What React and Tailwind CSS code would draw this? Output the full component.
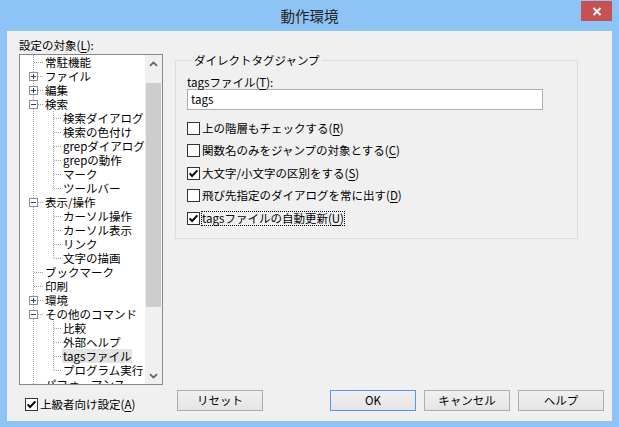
import React from "react";

const rows = [
  [0, null, "常駐機能"],
  [0, "+", "ファイル"],
  [0, "+", "編集"],
  [0, "-", "検索"],
  [1, null, "検索ダイアログ"],
  [1, null, "検索の色付け"],
  [1, null, "grepダイアログ"],
  [1, null, "grepの動作"],
  [1, null, "マーク"],
  [1, null, "ツールバー", true],
  [0, "-", "表示/操作"],
  [1, null, "カーソル操作"],
  [1, null, "カーソル表示"],
  [1, null, "リンク"],
  [1, null, "文字の描画", true],
  [0, null, "ブックマーク"],
  [0, null, "印刷"],
  [0, "+", "環境"],
  [0, "-", "その他のコマンド"],
  [1, null, "比較"],
  [1, null, "外部ヘルプ"],
  [1, null, "tagsファイル", false, true],
  [1, null, "プログラム実行", true],
  [0, null, "パフォーマンス"],
];

const DOT = "#a0a0a0";

function RowLines({ level, exp, last }) {
  const w = level === 0 ? 25 : 43;
  return (
    <svg width={w} height="14" viewBox={`0 0 ${w} 14`} shapeRendering="crispEdges" className="shrink-0">
      <line x1="13.5" y1="0" x2="13.5" y2="14" stroke={DOT} strokeDasharray="1 1" />
      {level === 0 && (
        <line x1="14" y1="7.5" x2="24" y2="7.5" stroke={DOT} strokeDasharray="1 1" />
      )}
      {level === 1 && (
        <>
          <line x1="33.5" y1="0" x2="33.5" y2={last ? 8 : 14} stroke={DOT} strokeDasharray="1 1" />
          <line x1="34" y1="7.5" x2="42" y2="7.5" stroke={DOT} strokeDasharray="1 1" />
        </>
      )}
      {exp && (
        <>
          <rect x="9.5" y="3.5" width="8" height="8" fill="#fff" stroke="#919191" />
          <line x1="11" y1="7.5" x2="16" y2="7.5" stroke="#2b3f73" />
          {exp === "+" && <line x1="13.5" y1="5" x2="13.5" y2="10" stroke="#2b3f73" />}
        </>
      )}
    </svg>
  );
}

function M({ c }) {
  return <span className="underline underline-offset-[2px] decoration-[1px]">{c}</span>;
}

function Check({ checked }) {
  return (
    <span className="w-[13px] h-[13px] border border-[#333333] bg-white flex items-center justify-center shrink-0">
      {checked && (
        <svg width="11" height="11" viewBox="0 0 11 11">
          <path d="M1.6 5.4 L4.1 8 L9.4 2.4" stroke="#000" strokeWidth="1.9" fill="none" />
        </svg>
      )}
    </span>
  );
}

function Chevron({ down }) {
  return (
    <svg width="9" height="6" viewBox="0 0 9 6">
      <path
        d={down ? "M1 1.2 L4.5 4.6 L8 1.2" : "M1 4.8 L4.5 1.4 L8 4.8"}
        stroke="#606060"
        strokeWidth="1.8"
        fill="none"
      />
    </svg>
  );
}

function Btn({ children, def }) {
  return (
    <div
      className={`w-[86px] h-[21px] flex items-center justify-center border bg-linear-to-b from-[#f0f0f0] to-[#e5e5e5] ${
        def ? "border-[#4f9be8]" : "border-[#adadad]"
      }`}
    >
      {children}
    </div>
  );
}

function CheckRow({ checked, children, focus, className = "" }) {
  return (
    <div className={`h-[14px] flex items-center ${className}`}>
      <Check checked={checked} />
      <span
        className={`ml-[2px] leading-[13px] whitespace-nowrap ${
          focus ? "outline outline-1 outline-dotted outline-black" : ""
        }`}
      >
        {children}
      </span>
    </div>
  );
}

export default function App() {
  return (
    <div className="w-[619px] h-[427px] bg-[#8ec4f5] flex flex-col font-['Noto_Sans_CJK_JP','Noto_Sans',sans-serif] text-[11.5px] text-black">
      <div className="h-[31px] relative flex items-center justify-center shrink-0">
        <span className="text-[14.5px] text-[#222222] mt-[1px]">動作環境</span>
        <div className="absolute right-[7px] top-[1px] w-[31px] h-[20px] bg-[#c75050] flex items-center justify-center">
          <svg width="10" height="9" viewBox="0 0 10 9">
            <path d="M1.5 1 L8.5 8 M8.5 1 L1.5 8" stroke="#fff" strokeWidth="2" fill="none" />
          </svg>
        </div>
      </div>
      <div className="mx-[7px] h-[390px] bg-[#f0f0f0] flex">
        {/* left column */}
        <div className="w-[156px] pl-[12px] pt-[7px] flex flex-col shrink-0">
          <div className="h-[14px] leading-[14px] mb-[2px] whitespace-nowrap">
            設定の対象(<M c="L" />):
          </div>
          <div className="w-[144px] h-[331px] border border-[#828790] bg-white flex">
            <div className="flex-1 overflow-hidden">
              {rows.map(([level, exp, text, last, sel], i) => (
                <div key={i} className="h-[14px] flex items-center">
                  <RowLines level={level} exp={exp} last={last} />
                  <span
                    className={`leading-[14px] h-[14px] px-[1px] -ml-[1px] whitespace-nowrap ${
                      sel ? "bg-[#e3e3e3]" : ""
                    }`}
                  >
                    {text}
                  </span>
                </div>
              ))}
            </div>
            <div className="w-[17px] bg-[#f0f0f0] flex flex-col shrink-0">
              <div className="h-[17px] flex items-center justify-center">
                <Chevron />
              </div>
              <div className="mt-[11px] h-[224px] bg-[#cdcdcd] mx-[1px]" />
              <div className="flex-1" />
              <div className="h-[17px] flex items-center justify-center">
                <Chevron down />
              </div>
            </div>
          </div>
          <div className="mt-[12px] ml-[6px]">
            <CheckRow checked>
              上級者向け設定(<M c="A" />)
            </CheckRow>
          </div>
        </div>
        {/* right column */}
        <div className="ml-[12px] flex-1 flex flex-col justify-between pt-[22px] pr-[8px] pb-[10px]">
          <fieldset className="w-[403px] border border-[#dcdcdc] pl-[11px] pb-[13px]">
            <legend className="ml-[5px] px-[2px] leading-[14px]">ダイレクトタグジャンプ</legend>
            <div className="mt-[8px] h-[14px] leading-[14px]">
              tagsファイル(<M c="T" />):
            </div>
            <div className="w-[356px] h-[21px] border border-[#adadad] bg-white pl-[3px] flex items-center">
              tags
            </div>
            <CheckRow className="mt-[11px]">
              上の階層もチェックする(<M c="R" />)
            </CheckRow>
            <CheckRow className="mt-[8px]">
              関数名のみをジャンプの対象とする(<M c="C" />)
            </CheckRow>
            <CheckRow checked className="mt-[9px]">
              大文字/小文字の区別をする(<M c="S" />)
            </CheckRow>
            <CheckRow className="mt-[8px]">
              飛び先指定のダイアログを常に出す(<M c="D" />)
            </CheckRow>
            <CheckRow checked focus className="mt-[9px]">
              tagsファイルの自動更新(<M c="U" />)
            </CheckRow>
          </fieldset>
          <div className="flex">
            <div className="ml-[2px]">
              <Btn>リセット</Btn>
            </div>
            <div className="ml-auto flex gap-[8px]">
              <Btn def>OK</Btn>
              <Btn>キャンセル</Btn>
              <Btn>ヘルプ</Btn>
            </div>
          </div>
        </div>
      </div>
    </div>
  );
}
